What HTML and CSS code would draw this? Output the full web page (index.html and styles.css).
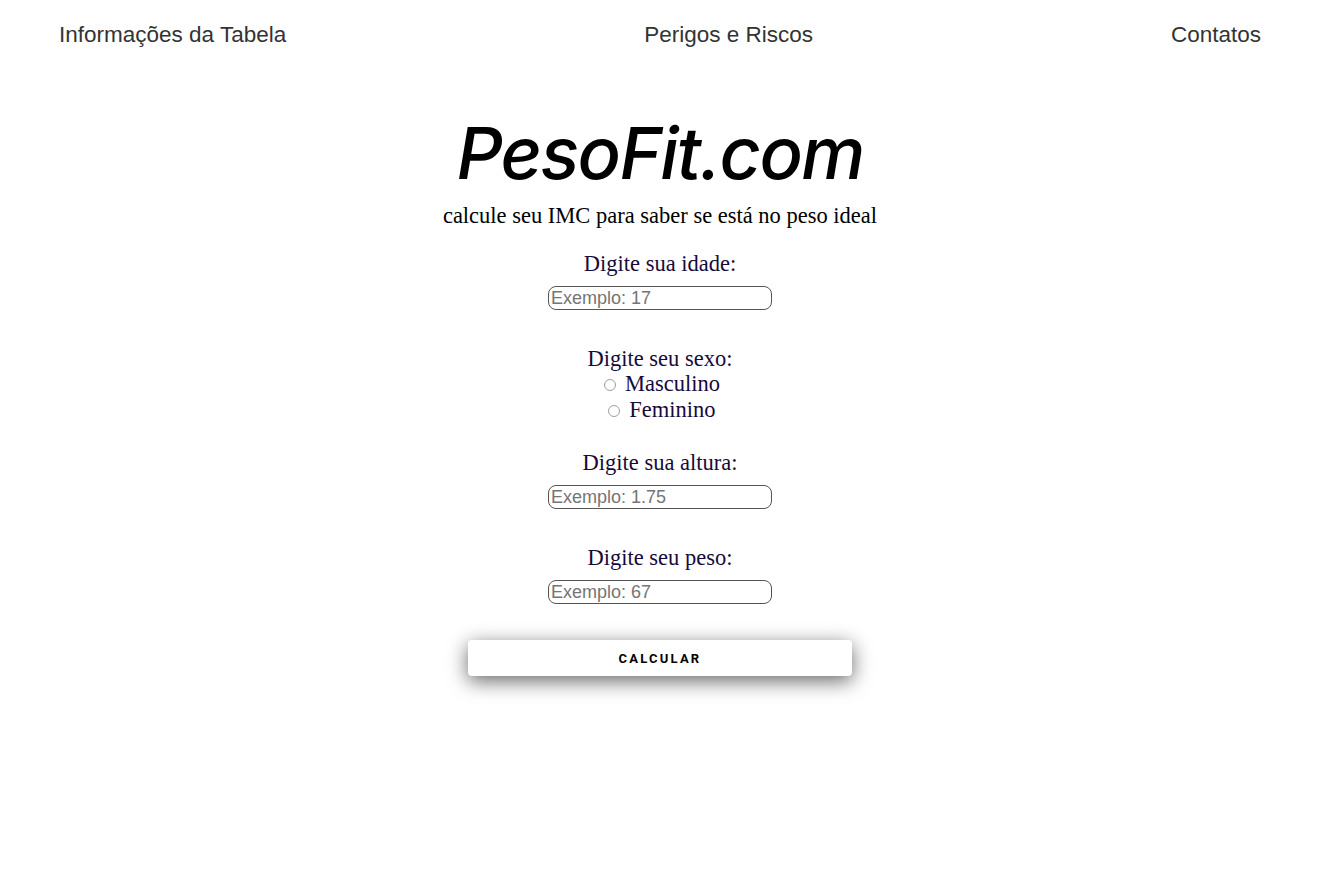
FILE: index.html
```html
<!DOCTYPE html>
<html lang="pt-BR">
<head>
<meta charset="utf-8">
<title>PesoFit.com</title>
<link rel="stylesheet" href="styles.css">
</head>
<body>
<header class="topbar">
  <nav class="nav">
    <a class="nav-link" href="#">Informações da Tabela</a>
    <a class="nav-link" href="#">Perigos e Riscos</a>
    <a class="nav-link" href="#">Contatos</a>
  </nav>
</header>
<main class="main">
  <h1 class="title">PesoFit.com</h1>
  <p class="subtitle">calcule seu IMC para saber se está no peso ideal</p>
  <form class="form">
    <div class="field">
      <label class="label" for="idade">Digite sua idade:</label>
      <input class="input" id="idade" type="text" placeholder="Exemplo: 17">
    </div>
    <div class="field field-radio">
      <span class="label">Digite seu sexo:</span>
      <label class="option"><input class="radio" type="radio" name="sexo"> Masculino</label>
      <label class="option"><input class="radio" type="radio" name="sexo"> Feminino</label>
    </div>
    <div class="field">
      <label class="label" for="altura">Digite sua altura:</label>
      <input class="input" id="altura" type="text" placeholder="Exemplo: 1.75">
    </div>
    <div class="field">
      <label class="label" for="peso">Digite seu peso:</label>
      <input class="input" id="peso" type="text" placeholder="Exemplo: 67">
    </div>
    <button class="button" type="button">CALCULAR</button>
  </form>
</main>
</body>
</html>
```
FILE: styles.css
```css
* { box-sizing: border-box; }
html, body { margin: 0; padding: 0; background: #fff; }
body {
  min-height: 100vh;
  font-family: "Liberation Serif", "Times New Roman", serif;
  color: #000;
}

.topbar { height: 70px; }
.nav {
  display: flex;
  justify-content: space-between;
  align-items: center;
  height: 70px;
  padding: 0 68px 0 59px;
}
.nav-link {
  font-family: "Liberation Sans", Arial, sans-serif;
  font-size: 22.5px;
  color: #333;
  text-decoration: none;
}

.main {
  display: flex;
  flex-direction: column;
  align-items: center;
  padding-right: 9px;
  padding-bottom: 60px;
}
.title {
  margin: 34px 0 0;
  font-family: Inter, "Open Sans", sans-serif;
  font-style: italic;
  font-weight: 500;
  font-size: 72px;
  line-height: 98px;
  letter-spacing: -1.7px;
}
.subtitle {
  margin: 1px 0 0;
  font-size: 22.5px;
  line-height: 26px;
}
.form {
  display: flex;
  flex-direction: column;
  align-items: center;
  margin-top: 22px;
}
.field {
  display: flex;
  flex-direction: column;
  align-items: center;
  margin-bottom: 36px;
}
.field-radio { margin-bottom: 27px; }
.label, .option {
  font-size: 22.5px;
  line-height: 26px;
  color: #170a3a;
}
.label { margin-bottom: 9px; }
.field-radio .label { margin-bottom: 0; line-height: 25px; }
.option { display: flex; align-items: center; padding-left: 4px; }
.radio {
  width: 12px;
  height: 12px;
  margin: 1px 9px 0 0;
  accent-color: #888;
  opacity: 0.7;
}
.input {
  width: 224px;
  height: 24px;
  padding: 1px 2px;
  border: 1px solid #555;
  border-radius: 8px;
  font-family: "Liberation Sans", Arial, sans-serif;
  font-size: 18px;
  background: #fff;
}
.input::placeholder { color: #757575; }
.button {
  width: 384px;
  height: 36px;
  border: none;
  border-radius: 4px;
  background: #fff;
  box-shadow: 0 5px 20px rgba(0, 0, 0, 0.6);
  font-family: Roboto, "Liberation Sans", sans-serif;
  font-weight: 700;
  font-size: 13px;
  letter-spacing: 2.2px;
  color: #000;
}
```
